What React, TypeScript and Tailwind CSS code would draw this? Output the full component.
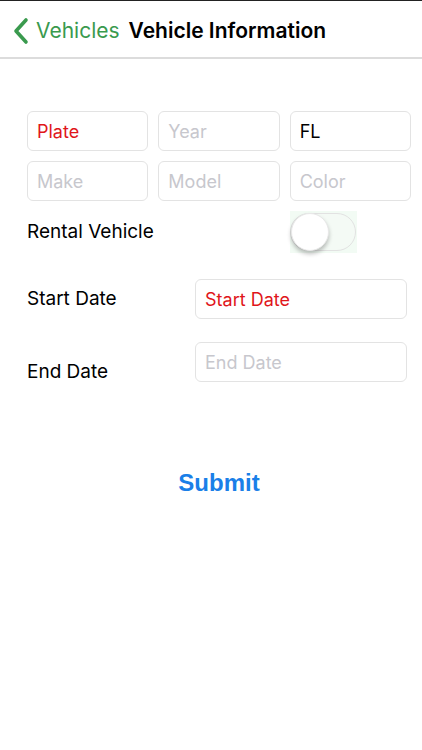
import React from "react";

const font = { fontFamily: "Inter, 'Noto Sans', sans-serif" };

function Field({ text, tone, className }: { text: string; tone: "red" | "ph" | "black"; className?: string }) {
  const color = tone === "red" ? "text-[#e0161b]" : tone === "ph" ? "text-[#c7c7cd]" : "text-black";
  return (
    <div className={`h-[40px] rounded-[6px] border border-[#e3e3e3] flex items-center pl-[9px] text-[18px] ${color} ${className ?? ""}`}>
      {text}
    </div>
  );
}

export default function App() {
  return (
    <div className="w-[422px] h-[750px] bg-white relative overflow-hidden" style={font}>
      <div className="h-[1px] bg-[#222]" />
      <div className="h-[58px] flex items-center pt-[3px] border-b-2 border-[#dcdcdc]">
        <svg width="18" height="28" viewBox="0 0 18 28" className="ml-[11px]">
          <path d="M15 3 L5 14 L15 25" fill="none" stroke="#3a9a4e" strokeWidth="3.6" strokeLinecap="round" strokeLinejoin="round" />
        </svg>
        <span className="ml-[7px] text-[21px] text-[#3a9a4e]">Vehicles</span>
        <span className="ml-[9px] text-[21px] font-semibold text-black">Vehicle Information</span>
      </div>
      <div className="pl-[27px] pr-[11px] pt-[52px]">
        <div className="grid grid-cols-3 gap-x-[10px] gap-y-[10px]">
          <Field text="Plate" tone="red" />
          <Field text="Year" tone="ph" />
          <Field text="FL" tone="black" />
          <Field text="Make" tone="ph" />
          <Field text="Model" tone="ph" />
          <Field text="Color" tone="ph" />
        </div>
        <div className="flex items-center mt-[10px] h-[42px]">
          <span className="text-[19px] text-black w-[263px]">Rental Vehicle</span>
          <div className="w-[67px] h-[42px] bg-[#f2fbf4] flex items-center">
            <div className="relative w-[66px] h-[38px] rounded-full border border-[#e2e2e2] bg-[#f4faf5]">
              <div className="absolute left-[0px] top-[-1px] w-[38px] h-[38px] rounded-full bg-white shadow-[0_3px_4px_rgba(0,0,0,0.25)] border border-[#e8e8e8]" />
            </div>
          </div>
        </div>
        <div className="flex items-center mt-[26px]">
          <span className="text-[19px] text-black w-[168px]">Start Date</span>
          <Field text="Start Date" tone="red" className="w-[212px]" />
        </div>
        <div className="flex items-start mt-[23px]">
          <span className="text-[19px] text-black w-[168px] mt-[16px]">End Date</span>
          <Field text="End Date" tone="ph" className="w-[212px]" />
        </div>
      </div>
      <div className="flex justify-center mt-[78px] pl-[16px]">
        <span className="text-[24px] font-bold text-[#1a7fe8]" style={{ fontFamily: "'Liberation Sans', Arial, sans-serif" }}>Submit</span>
      </div>
    </div>
  );
}
